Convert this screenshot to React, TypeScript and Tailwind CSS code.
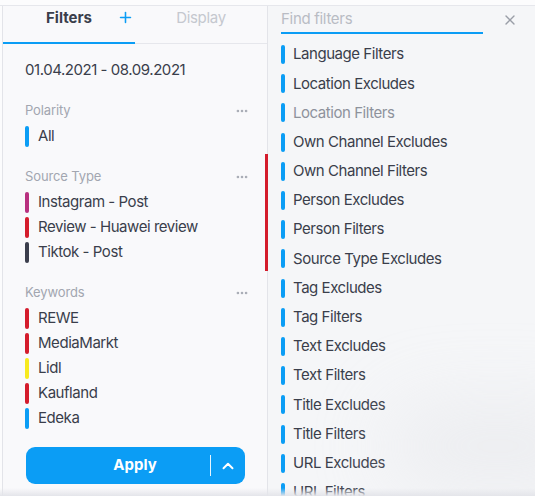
import { Plus, X, ChevronUp, MoreHorizontal } from 'lucide-react';

const BLUE = 'bg-[#0b9df5]';

type Item = { label: string; color: string };

const sourceTypes: Item[] = [
  { label: 'Instagram - Post', color: 'bg-[#b8307f]' },
  { label: 'Review - Huawei review', color: 'bg-[#d41c2c]' },
  { label: 'Tiktok - Post', color: 'bg-[#3b3e4c]' },
];

const keywords: Item[] = [
  { label: 'REWE', color: 'bg-[#d41c2c]' },
  { label: 'MediaMarkt', color: 'bg-[#d41c2c]' },
  { label: 'Lidl', color: 'bg-[#f7ea1f]' },
  { label: 'Kaufland', color: 'bg-[#d41c2c]' },
  { label: 'Edeka', color: BLUE },
];

const filterTypes = [
  'Language Filters',
  'Location Excludes',
  'Location Filters',
  'Own Channel Excludes',
  'Own Channel Filters',
  'Person Excludes',
  'Person Filters',
  'Source Type Excludes',
  'Tag Excludes',
  'Tag Filters',
  'Text Excludes',
  'Text Filters',
  'Title Excludes',
  'Title Filters',
  'URL Excludes',
  'URL Filters',
];

function Chip({ item }: { item: Item }) {
  return (
    <div className="flex items-center h-[25px] gap-[9px]">
      <span className={`w-[4px] h-[21px] rounded-full ${item.color}`} />
      <span className="text-[15px] tracking-[-0.03em] text-[#3a3e4b]">{item.label}</span>
    </div>
  );
}

function Section({ title, items, last }: { title: string; items: Item[]; last?: boolean }) {
  return (
    <div className={last ? '' : 'mb-[18px]'}>
      <div className="flex items-center justify-between h-[20px] mb-[3px] pr-[18px]">
        <span className="text-[13px] tracking-[-0.01em] text-[#a2a6b0]">{title}</span>
        <MoreHorizontal className="w-[14px] h-[14px] text-[#a9adb6]" strokeWidth={2.5} />
      </div>
      {items.map((it) => (
        <Chip key={it.label} item={it} />
      ))}
    </div>
  );
}

export default function App() {
  return (
    <div
      className="relative w-[535px] h-[496px] overflow-hidden bg-[#fcfcfd]"
      style={{ fontFamily: 'Inter, "Noto Sans", sans-serif' }}
    >
      <div className="h-[6px] border-b border-[#e6e7ec]" />
      <div className="flex h-[490px]">
        {/* Left panel */}
        <div className="relative w-[266px] ml-[2px] border-l border-r border-[#e3e4e9] bg-[#f9f9fb] flex flex-col">
          <div className="flex h-[38px] border-b border-[#e6e7ec]">
            <div className="relative w-[132px] flex justify-center pt-[2px] border-b-2 border-[#0b9df5] -mb-[1px]">
              <span className="text-[15px] font-bold text-[#3a3e4b] leading-[20px]">Filters</span>
              <Plus className="absolute left-[114px] top-[3px] w-[17px] h-[17px] text-[#0b9df5]" strokeWidth={2.2} />
            </div>
            <div className="flex-1 flex justify-center pt-[2px]">
              <span className="text-[15px] tracking-[-0.02em] text-[#c5c8cf] leading-[20px]">Display</span>
            </div>
          </div>

          <div className="pl-[22px] pt-[16px] flex-1 flex flex-col">
            <div className="text-[15px] tracking-[-0.03em] text-[#3a3e4b] h-[20px] leading-[20px] mb-[21px]">
              01.04.2021 - 08.09.2021
            </div>
            <Section title="Polarity" items={[{ label: 'All', color: BLUE }]} />
            <Section title="Source Type" items={sourceTypes} />
            <Section title="Keywords" items={keywords} last />

            <div className="mt-[16px] w-[219px] h-[37px] ml-[1px] rounded-[9px] bg-[#0b9df5] flex items-center text-white">
              <span className="flex-1 text-center text-[15px] font-bold pl-[34px]">Apply</span>
              <span className="w-[1px] h-[21px] bg-white/90" />
              <ChevronUp className="w-[18px] h-[18px] mx-[8px]" strokeWidth={2.6} />
            </div>
          </div>

          <span className="absolute right-[-1px] top-[148px] w-[3px] h-[117px] bg-[#d41c2c]" />
        </div>

        {/* Right panel */}
        <div className="relative flex-1 bg-[#f5f6f8] pl-[13px] pr-[12px]">
          <div className="flex items-start">
            <div className="w-[202px] h-[28px] border-b-2 border-[#0b9df5] text-[15px] tracking-[-0.02em] text-[#b9bcc4] leading-[22px] pt-[2px]">
              Find filters
            </div>
            <X className="ml-[19px] mt-[6px] w-[16px] h-[16px] text-[#9a9ea7]" strokeWidth={2} />
          </div>
          <div className="pt-[6px]">
            {filterTypes.map((f) => (
              <div key={f} className="flex items-center h-[29.2px] gap-[8px]">
                <span className="w-[4px] h-[19px] rounded-full bg-[#0b9df5]" />
                <span
                  className={`text-[15px] tracking-[-0.03em] ${
                    f === 'Location Filters' ? 'text-[#8e929c]' : 'text-[#3a3e4b]'
                  }`}
                >
                  {f}
                </span>
              </div>
            ))}
          </div>
          <div className="absolute left-[120px] top-[400px] w-[220px] h-[80px] rounded-full bg-[#dcdde2] opacity-40 blur-2xl pointer-events-none" />
        </div>
      </div>
      <div className="absolute left-0 bottom-0 w-full h-[8px] bg-gradient-to-b from-transparent to-[#e4e5ea]" />
    </div>
  );
}
